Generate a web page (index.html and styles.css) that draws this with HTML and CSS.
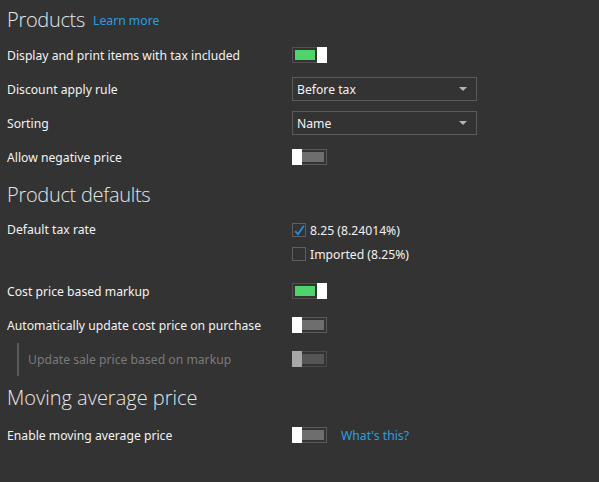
FILE: index.html
```html
<!DOCTYPE html>
<html>
<head>
<meta charset="utf-8">
<link rel="stylesheet" href="styles.css">
</head>
<body>
<div class="page">
  <div class="heading h1">
    <span class="title">Products</span>
    <a class="link">Learn more</a>
  </div>
  <div class="row">
    <div class="label">Display and print items with tax included</div>
    <div class="ctrl"><span class="toggle on"><span class="track"></span><span class="thumb"></span></span></div>
  </div>
  <div class="row">
    <div class="label">Discount apply rule</div>
    <div class="ctrl"><div class="select"><span>Before tax</span><span class="arrow"></span></div></div>
  </div>
  <div class="row">
    <div class="label">Sorting</div>
    <div class="ctrl"><div class="select"><span>Name</span><span class="arrow"></span></div></div>
  </div>
  <div class="row">
    <div class="label">Allow negative price</div>
    <div class="ctrl"><span class="toggle"><span class="track"></span><span class="thumb"></span></span></div>
  </div>

  <div class="heading h2">
    <span class="title">Product defaults</span>
  </div>
  <div class="row tall">
    <div class="label">Default tax rate</div>
    <div class="ctrl checks">
      <div class="check-item">
        <span class="checkbox checked">
          <svg width="11" height="11" viewBox="0 0 11 11"><path d="M1.2 6.2 L4 9.2 L9.8 0.8" fill="none" stroke="#1c8fe0" stroke-width="1.8"/></svg>
        </span>
        <span>8.25 (8.24014%)</span>
      </div>
      <div class="check-item">
        <span class="checkbox"></span>
        <span>Imported (8.25%)</span>
      </div>
    </div>
  </div>
  <div class="row">
    <div class="label">Cost price based markup</div>
    <div class="ctrl"><span class="toggle on"><span class="track"></span><span class="thumb"></span></span></div>
  </div>
  <div class="row">
    <div class="label">Automatically update cost price on purchase</div>
    <div class="ctrl"><span class="toggle"><span class="track"></span><span class="thumb"></span></span></div>
  </div>
  <div class="row sub">
    <div class="label"><span class="bar"></span><span class="dim">Update sale price based on markup</span></div>
    <div class="ctrl"><span class="toggle disabled"><span class="track"></span><span class="thumb"></span></span></div>
  </div>

  <div class="heading h3">
    <span class="title">Moving average price</span>
  </div>
  <div class="row">
    <div class="label">Enable moving average price</div>
    <div class="ctrl"><span class="toggle"><span class="track"></span><span class="thumb"></span></span><a class="link what">What's this?</a></div>
  </div>
</div>
</body>
</html>
```

FILE: styles.css
```css
html, body {
  margin: 0;
  padding: 0;
  background: #333333;
}
body {
  font-family: "Noto Sans", "Open Sans", "DejaVu Sans", sans-serif;
  font-size: 12.2px;
  color: #f2f2f2;
  width: 599px;
  height: 482px;
  overflow: hidden;
}
.page {
  padding-left: 7px;
}
.heading {
  display: flex;
  align-items: center;
}
.heading .title {
  font-family: "Open Sans", "Noto Sans", sans-serif;
  font-weight: 300;
  font-size: 20px;
  color: #e6e6e6;
}
.h1 .title {
  letter-spacing: -0.3px;
}
.h2 .title {
  letter-spacing: -0.3px;
}
.h1 { height: 38px; }
.h2 { height: 40px; }
.h3 { height: 42px; }
.link {
  color: #2b9ee0;
  font-size: 12.2px;
  margin-left: 8px;
  margin-top: 2px;
}
.row {
  display: grid;
  grid-template-columns: 285px 1fr;
  height: 34px;
  align-items: center;
}
.row.tall {
  height: 60px;
  align-items: start;
  padding-top: 4px;
  box-sizing: border-box;
}
.row.tall .label {
  line-height: 24px;
}
.ctrl {
  display: flex;
  align-items: center;
}
.toggle {
  position: relative;
  display: inline-block;
  width: 35px;
  height: 16px;
  box-sizing: border-box;
  border: 1px solid #5c5c5c;
  padding: 2px;
}
.toggle .track {
  display: block;
  height: 100%;
  background: #6e6e6e;
}
.toggle .thumb {
  position: absolute;
  top: -1px;
  left: -1px;
  width: 10px;
  height: 16px;
  background: #ffffff;
}
.toggle.on {
  border-color: #505050;
}
.toggle.on .track {
  background: #4fd36b;
  margin-right: 9px;
}
.toggle.on .thumb {
  left: auto;
  right: -1px;
}
.toggle.disabled {
  border-color: #4a4a4a;
}
.toggle.disabled .track {
  background: #555555;
}
.toggle.disabled .thumb {
  background: #a8a8a8;
}
.select {
  width: 185px;
  height: 24px;
  box-sizing: border-box;
  border: 1px solid #5a5a5a;
  display: flex;
  align-items: center;
  justify-content: space-between;
  padding: 0 9px 0 4px;
  color: #f2f2f2;
}
.arrow {
  width: 0;
  height: 0;
  border-left: 4px solid transparent;
  border-right: 4px solid transparent;
  border-top: 4px solid #b5b5b5;
}
.checks {
  flex-direction: column;
  align-items: flex-start;
}
.check-item {
  height: 24px;
  display: flex;
  align-items: center;
}
.checkbox {
  width: 14px;
  height: 14px;
  box-sizing: border-box;
  border: 1px solid #5e5e5e;
  margin-right: 4px;
  display: flex;
  align-items: center;
  justify-content: center;
}
.row.sub .label {
  display: flex;
  align-items: center;
  height: 34px;
}
.bar {
  width: 2px;
  height: 33px;
  background: #5a5a5a;
  margin-left: 10px;
  margin-right: 9px;
}
.dim {
  color: #7a7a7a;
}
.what {
  margin-left: 14px;
  margin-top: 0;
}
```
